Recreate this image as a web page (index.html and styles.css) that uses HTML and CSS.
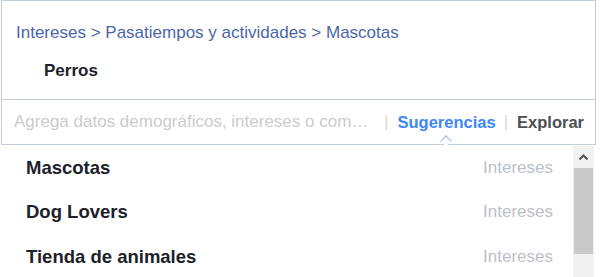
FILE: index.html
```html
<!DOCTYPE html>
<html lang="es">
<head>
  <meta charset="UTF-8">
  <title>Segmentación detallada</title>
  <link rel="stylesheet" href="styles.css">
</head>
<body>

<div class="targeting">
  <div class="selected">
    <div class="crumbs">
      <a href="#">Intereses</a> &gt; <a href="#">Pasatiempos y actividades</a> &gt; <a href="#">Mascotas</a>
    </div>
    <div class="item">Perros</div>
  </div>
  <div class="search">
    <input class="search-input" type="text" placeholder="Agrega datos demográficos, intereses o com…">
    <span class="sep">|</span>
    <a class="tab active" href="#">Sugerencias</a>
    <span class="sep">|</span>
    <a class="tab" href="#">Explorar</a>
  </div>
</div>

<div class="suggestions">
  <ul class="results">
    <li><span class="name">Mascotas</span><span class="type">Intereses</span></li>
    <li><span class="name">Dog Lovers</span><span class="type">Intereses</span></li>
    <li><span class="name">Tienda de animales</span><span class="type">Intereses</span></li>
  </ul>
  <div class="scrollbar">
    <div class="scroll-up">
      <svg width="9" height="6" viewBox="0 0 9 6"><path d="M0.5 5.5 L4.5 1.5 L8.5 5.5" fill="none" stroke="#505050" stroke-width="2"/></svg>
    </div>
    <div class="thumb"></div>
  </div>
</div>

</body>
</html>
```

FILE: styles.css
```css
body {
  margin: 0;
  padding: 0;
  background: #fff;
  font-family: "Liberation Sans", Arial, sans-serif;
  overflow: hidden;
}
a {
  text-decoration: none;
}
.targeting {
  width: 593px;
  margin-left: 1px;
  border: 1px solid #c3cbdd;
}
.selected {
  height: 99px;
  border-bottom: 1px solid #c3cbdd;
  box-sizing: border-box;
  padding: 21px 0 0 14px;
}
.crumbs {
  font-size: 17px;
  line-height: 22px;
  color: #4b67a8;
}
.crumbs a {
  color: #4b67a8;
}
.item {
  margin-top: 16px;
  margin-left: 28px;
  font-size: 17px;
  line-height: 22px;
  font-weight: bold;
  color: #1d2129;
}
.search {
  position: relative;
  height: 44px;
  display: flex;
  align-items: center;
  padding: 0 11px 0 12px;
}
.search-input {
  flex: 1;
  min-width: 0;
  border: none;
  outline: none;
  padding: 0;
  font-family: "Liberation Sans", Arial, sans-serif;
  font-size: 17px;
  color: #1d2129;
}
.search-input::placeholder {
  color: #cccccc;
}
.sep {
  color: #d5d8dd;
  font-size: 17px;
  margin: 0 9px 0 8px;
}
.tab {
  font-size: 16.5px;
  font-weight: bold;
  color: #4b4f56;
}
.tab.active {
  position: relative;
  color: #3d88f5;
}
.tab.active::after {
  content: "";
  position: absolute;
  left: 50%;
  bottom: -13px;
  width: 7px;
  height: 7px;
  margin-left: -5px;
  border-left: 1.5px solid #9ab7e6;
  border-top: 1.5px solid #9ab7e6;
  transform: rotate(45deg);
  background: #fff;
}
.suggestions {
  display: flex;
  width: 594px;
}
.results {
  flex: 1;
  list-style: none;
  margin: 0;
  padding: 0;
}
.results li {
  height: 44.5px;
  box-sizing: border-box;
  display: flex;
  align-items: center;
  justify-content: space-between;
  padding: 1px 20px 0 26px;
}
.name {
  font-size: 18.5px;
  font-weight: bold;
  color: #1d2129;
}
.type {
  font-size: 17px;
  color: #bcc0c8;
}
.scrollbar {
  width: 21px;
  margin-top: 1px;
  background: #f1f1f1;
  height: 132px;
}
.scroll-up {
  height: 22px;
  display: flex;
  align-items: center;
  justify-content: center;
}
.thumb {
  margin: 0 1px;
  height: 86px;
  background: #c9c9c9;
}
```
